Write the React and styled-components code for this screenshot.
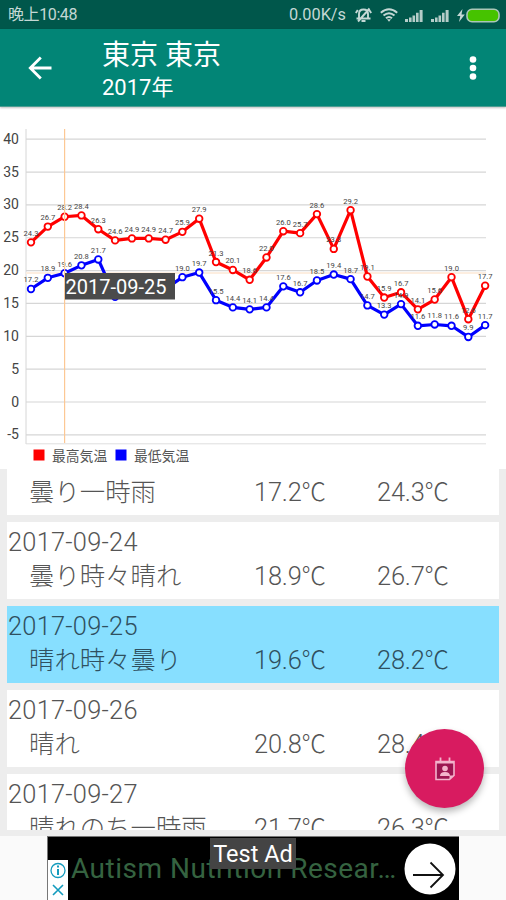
import React from 'react';
import styled, {createGlobalStyle} from 'styled-components';

const GlobalStyle = createGlobalStyle`
    * {
        box-sizing: border-box;
    }

    body {
        margin: 0;
        background: #fafafa;
        font-family: Roboto, "Noto Sans CJK JP", sans-serif;
    }
`;

const Screen = styled.div`
    width: 506px;
    height: 900px;
    display: flex;
    flex-direction: column;
    overflow: hidden;
    position: relative;
`;

const StatusBar = styled.div`
    height: 29px;
    flex: none;
    display: flex;
    align-items: center;
    padding: 1px 6px 0 8px;
    background: #00574b;
    color: #c4d8d5;
    font-size: 16px;
    line-height: 28px;
`;

const Clock = styled.span`
    flex: 1;
    font-size: 16px;
    letter-spacing: -0.4px;
`;

const NetworkSpeed = styled.span`
    margin-right: 2px;
    font-size: 16.3px;
`;

const StatusIcons = styled.svg`
    display: block;
    margin-left: 7px;
`;

const AppBar = styled.header`
    height: 78px;
    flex: none;
    display: flex;
    align-items: center;
    padding: 0 19px 0 28px;
    background: #028576;
    color: #fff;
    border-bottom: 1px solid #4c9d92;
    box-shadow: 0 1px 2px rgba(0, 0, 0, 0.25);
    z-index: 1;
`;

const Titles = styled.div`
    flex: 1;
    margin-left: 50px;
    padding-top: 6px;
`;

const Title = styled.h1`
    margin: 0;
    font-size: 28px;
    font-weight: 400;
    line-height: 35px;
    white-space: nowrap;
`;

const Subtitle = styled.div`
    font-size: 22px;
    line-height: 30px;
`;

const ChartSection = styled.section`
    height: 362px;
    flex: none;
    background: #fff;
`;

const ListSection = styled.section`
    height: 367px;
    flex: none;
    padding: 0 7px 6px;
    background: #ededed;
`;

const ListViewport = styled.div`
    height: 361px;
    overflow: hidden;
`;

const Cards = styled.div`
    display: flex;
    flex-direction: column;
    gap: 7px;
    margin-top: -31px;
`;

const Card = styled.div`
    height: 77px;
    flex: none;
    background: ${props => props.$selected ? '#87dfff' : '#fff'};
    color: ${props => props.$selected ? '#2f5060' : '#555'};
    font-size: 25.4px;
    font-weight: 300;
`;

const DateLine = styled.div`
    height: 38px;
    padding-left: 1px;
    line-height: 40px;
    letter-spacing: 0.25px;
`;

const WeatherLine = styled.div`
    display: grid;
    grid-template-columns: 225px 123px 1fr;
    padding-left: 22px;
    line-height: 33px;
    white-space: nowrap;
`;

const Temperature = styled.span`
    letter-spacing: -0.2px;
`;

const Unit = styled.span`
    font-family: "Noto Sans CJK JP", sans-serif;
    font-size: 24.5px;
    line-height: 1;
`;

const Fab = styled.button`
    position: absolute;
    left: 405px;
    top: 729px;
    width: 79px;
    height: 79px;
    padding: 0;
    border: 0;
    border-radius: 50%;
    background: #d81b60;
    box-shadow: 0 4px 7px rgba(0, 0, 0, 0.28);
    display: flex;
    align-items: center;
    justify-content: center;
`;

const AdBar = styled.footer`
    flex: 1;
    display: flex;
    padding-left: 47px;
    background: #fafafa;
`;

const Ad = styled.div`
    width: 412px;
    height: 64px;
    display: flex;
    align-items: flex-end;
    position: relative;
    background: #000;
    border-left: 1px solid #777;
    border-top: 1px solid #777;
`;

const AdChoices = styled.svg`
    flex: none;
    display: block;
    background: #fff;
`;

const AdText = styled.div`
    flex: 1;
    align-self: center;
    padding-left: 3px;
    color: #356340;
    font-size: 28px;
    line-height: 32px;
    letter-spacing: 0.5px;
    white-space: nowrap;
`;

const AdLabel = styled.div`
    position: absolute;
    left: 162px;
    top: 1px;
    width: 86px;
    height: 31px;
    background: #444;
    color: #fff;
    font-size: 23.5px;
    line-height: 33px;
    text-align: center;
    white-space: nowrap;
`;

const AdArrow = styled.svg`
    flex: none;
    align-self: center;
    margin-right: 3px;
`;

const highs = [
    24.3, 26.7, 28.2, 28.4, 26.3, 24.6, 24.9, 24.9, 24.7, 25.9, 27.9, 21.3, 20.1, 18.6,
    22.0, 26.0, 25.7, 28.6, 23.3, 29.2, 19.1, 15.9, 16.7, 14.1, 15.6, 19.0, 12.6, 17.7
];

const lows = [
    17.2, 18.9, 19.6, 20.8, 21.7, 16.0, 16.4, 16.9, 17.2, 19.0, 19.7, 15.5, 14.4, 14.1,
    14.4, 17.6, 16.7, 18.5, 19.4, 18.7, 14.7, 13.3, 14.9, 11.6, 11.8, 11.6, 9.9, 11.7
];

const ticks = [40, 35, 30, 25, 20, 15, 10, 5, 0, -5];

const days = [
    {date: '2017-09-23', weather: '曇り一時雨', low: '17.2', high: '24.3'},
    {date: '2017-09-24', weather: '曇り時々晴れ', low: '18.9', high: '26.7'},
    {date: '2017-09-25', weather: '晴れ時々曇り', low: '19.6', high: '28.2', selected: true},
    {date: '2017-09-26', weather: '晴れ', low: '20.8', high: '28.4'},
    {date: '2017-09-27', weather: '晴れのち一時雨', low: '21.7', high: '26.3'}
];

const toX = index => 31 + index * 16.82;
const toY = value => 295 - value * 6.57;

const Series = ({values, color}) => (
    <g>
        <polyline points={values.map((v, i) => `${toX(i)},${toY(v)}`).join(' ')}
                  fill="none" stroke={color} strokeWidth="3.2" strokeLinejoin="round"/>
        {values.map((v, i) => (
            <text key={`t${i}`} x={toX(i)} y={toY(v) - 6.5} textAnchor="middle"
                  fontSize="7.6" fill="#444">{v.toFixed(1)}</text>
        ))}
        {values.map((v, i) => (
            <circle key={`c${i}`} cx={toX(i)} cy={toY(v)} r="3.3" fill="#fff" stroke={color} strokeWidth="1.8"/>
        ))}
    </g>
);

const Legend = ({x, color, label}) => (
    <g>
        <rect x={x} y="342.5" width="11" height="11" fill={color}/>
        <text x={x + 18.5} y="353.5" fontSize="13.8" fill="#555">{label}</text>
    </g>
);

const TemperatureChart = () => (
    <svg width="506" height="362" viewBox="0 0 506 362" display="block">
        {ticks.map(t => (
            <g key={t}>
                <line x1="26" x2="486" y1={toY(t)} y2={toY(t)} stroke="#d6d6d6" strokeWidth="1.2"/>
                <text x="19" y={toY(t) + 4.5} textAnchor="end" fontSize="14" fill="#444">{t}</text>
            </g>
        ))}
        <line x1="26" x2="26" y1="22" y2="337" stroke="#d6d6d6"/>
        <line x1="26" x2="486" y1="336.8" y2="336.8" stroke="#dedede"/>
        <line x1="26" x2="486" y1="166" y2="166" stroke="#fdeee0" strokeWidth="2"/>
        <Series values={highs} color="#f00"/>
        <Series values={lows} color="#00f"/>
        <line x1="64.6" x2="64.6" y1="22" y2="336" stroke="#fcc894" strokeWidth="1.2"/>
        <rect x="65" y="166" width="110" height="26.5" fill="#4b4b4b"/>
        <text x="65.5" y="187" fontSize="20" fill="#fff" textLength="101">2017-09-25</text>
        <Legend x={33.5} color="#f00" label="最高気温"/>
        <Legend x={115.5} color="#00f" label="最低気温"/>
    </svg>
);

const Signal = () => (
    <StatusIcons width="19" height="13" viewBox="0 0 19 13" fill="#b5cdc9">
        <path d="M0 10h3v3H0zM4 8.5h2.6V13H4zM7.5 6.5h2.6V13H7.5zM11 3.8h2.6V13H11zM14.6 1h3v12h-3z"/>
    </StatusIcons>
);

const StatusBarIcons = () => (
    <>
        <StatusIcons width="18" height="18" viewBox="0 0 18 18" fill="none" stroke="#c4d8d5" strokeWidth="1.9">
            <path d="M4 12V8Q4 3.500 8.500 3.500T13 8v4M1.500 12.500h14M6.500 15h4M3 15.500L14.500 2.500M.8 7l2-3M16.200 7l-2-3"/>
        </StatusIcons>
        <StatusIcons width="18" height="14" viewBox="0 0 18 14" fill="none" stroke="#c4d8d5" strokeWidth="2">
            <path d="M.8 4.800Q9-2.200 17.200 4.800M3.500 7.600Q9 2.800 14.500 7.600M6 10.300Q9 7.600 12 10.300"/>
            <path d="M7 11.200h4L9 13.800z" fill="#c4d8d5" stroke="none"/>
        </StatusIcons>
        <Signal/>
        <Signal/>
        <StatusIcons width="43" height="15" viewBox="0 0 43 15">
            <path d="M5.500 1L0 8h3.300L2 14l5.800-7.500H4.500z" fill="#c4d8d5"/>
            <rect x="10" y="1.300" width="32" height="12.400" rx="5" fill="#46c300" stroke="#a9c7b8" strokeWidth="1.600"/>
        </StatusIcons>
    </>
);

const DayCard = ({day}) => (
    <Card $selected={day.selected}>
        <DateLine>{day.date}</DateLine>
        <WeatherLine>
            <span>{day.weather}</span>
            <Temperature>{day.low}<Unit>℃</Unit></Temperature>
            <Temperature>{day.high}<Unit>℃</Unit></Temperature>
        </WeatherLine>
    </Card>
);

class App extends React.Component {

    render() {
        return (
            <Screen>
                <GlobalStyle/>
                <StatusBar>
                    <Clock>晚上10:48</Clock>
                    <NetworkSpeed>0.00K/s</NetworkSpeed>
                    <StatusBarIcons/>
                </StatusBar>

                <AppBar>
                    <svg width="24" height="24" viewBox="0 0 24 24" fill="none" stroke="#fff" strokeWidth="2.8">
                        <path d="M23.500 12H3M12.800 1.500L2.300 12l10.500 10.500"/>
                    </svg>
                    <Titles>
                        <Title>東京 東京</Title>
                        <Subtitle>2017年</Subtitle>
                    </Titles>
                    <svg width="28" height="28" viewBox="0 0 28 28" fill="#fff">
                        <circle cx="14" cy="5.500" r="3.300"/>
                        <circle cx="14" cy="14" r="3.300"/>
                        <circle cx="14" cy="22.500" r="3.300"/>
                    </svg>
                </AppBar>

                <ChartSection>
                    <TemperatureChart/>
                </ChartSection>

                <ListSection>
                    <ListViewport>
                        <Cards>
                            {days.map(day => <DayCard key={day.date} day={day}/>)}
                        </Cards>
                    </ListViewport>
                </ListSection>

                <AdBar>
                    <Ad>
                        <AdChoices width="20" height="40" viewBox="0 0 20 40" fill="none" stroke="#139bbd" strokeWidth="1.300">
                            <circle cx="10" cy="10.500" r="7"/>
                            <path d="M10 9v6M10 5.500v2" strokeWidth="2"/>
                            <path d="M5 25l10 10M15 25L5 35" strokeWidth="1.600"/>
                        </AdChoices>
                        <AdText>Autism Nutrition Resear…</AdText>
                        <AdLabel>Test Ad</AdLabel>
                        <AdArrow width="52" height="52" viewBox="0 0 52 52">
                            <circle cx="26" cy="26" r="25.500" fill="#fff"/>
                            <path d="M9 32h29M26.500 19.500L39 32 26.500 44.500" fill="none" stroke="#111" strokeWidth="1.800"/>
                        </AdArrow>
                    </Ad>
                </AdBar>

                <Fab aria-label="calendar">
                    <svg width="22" height="26" viewBox="0 0 22 26">
                        <path d="M2 5.500h18v14l-4.500 4H2z" fill="#9c1550" stroke="#f3b3cb" strokeWidth="1.600"/>
                        <path d="M2 6.500h18M6.500 1.500v6M15.500 1.500v6" stroke="#f3b3cb" strokeWidth="1.800"/>
                        <circle cx="11" cy="12.500" r="2.800" fill="#f3b3cb"/>
                        <path d="M6 20q0-4 5-4 5 0 5 4zM15.500 23.500v-4H20z" fill="#f3b3cb"/>
                    </svg>
                </Fab>
            </Screen>
        )
    }
}

export default App;
